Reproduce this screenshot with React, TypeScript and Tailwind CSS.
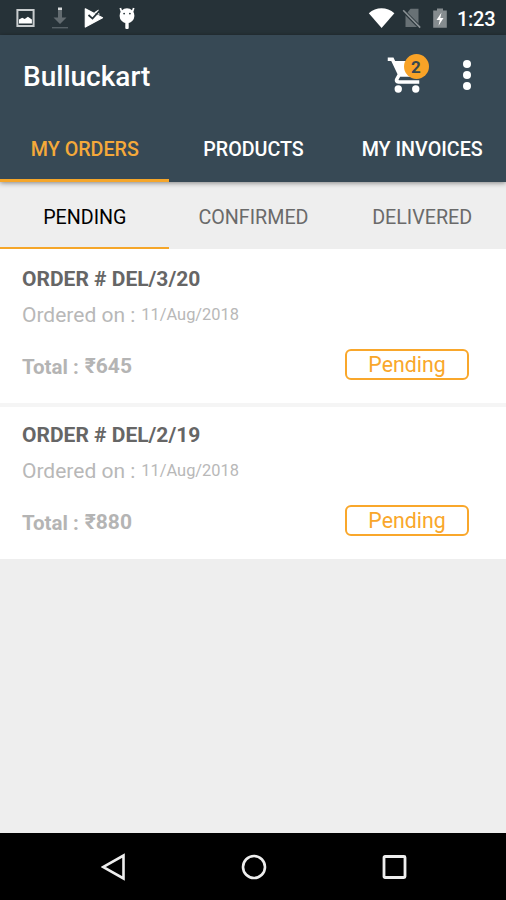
import clsx from "clsx";

type TOrder = { id: string; date: string; total: string; status: string };

const orders: TOrder[] = [
  { id: "DEL/3/20", date: "11/Aug/2018", total: "₹645", status: "Pending" },
  { id: "DEL/2/19", date: "11/Aug/2018", total: "₹880", status: "Pending" },
];

const StatusBar = () => (
  <div className="h-[35px] shrink-0 bg-[#263238]">
    <svg width="506" height="35" viewBox="0 0 506 35">
      {/* picture */}
      <rect x="17.4" y="10" width="16.2" height="16" fill="none" stroke="#c9cdcf" strokeWidth="2" />
      <path d="M19 23.5v-4l3.2-1.8 2.5 1.2 3.2-2.2 4 2.8v4z" fill="#fff" />
      {/* download */}
      <path d="M58 10h4v7.5h4.5L60 24l-6.5-6.5H58z" fill="#626b70" />
      <rect x="58" y="7.5" width="4" height="2.5" fill="#d8dbdc" />
      <rect x="52" y="27" width="16" height="1.4" fill="#566066" />
      {/* play store */}
      <path d="M85.3 8.8L102.5 17.8L85.3 27z" fill="#fff" stroke="#fff" strokeWidth="1.2" strokeLinejoin="round" />
      <path d="M94 12.5L98.5 9.5L99.5 15z" fill="#fff" />
      <path d="M88.5 15l4 3.6L99.2 11.2" fill="none" stroke="#263238" strokeWidth="1.8" />
      {/* debugging */}
      <circle cx="127" cy="15.7" r="7.4" fill="#fff" />
      <path d="M121.8 12.5l-1.5-4.5M132.2 12.5l1.5-4.5" stroke="#fff" strokeWidth="1.8" />
      <rect x="125.3" y="21" width="3.4" height="8" rx="1" fill="#fff" />
      <circle cx="124.1" cy="13.6" r="0.9" fill="#263238" />
      <circle cx="129.9" cy="13.6" r="0.9" fill="#263238" />
      {/* wifi */}
      <path d="M368.8 13.3C376 6.6 387 6.6 394.4 13.3L381.6 28z" fill="#fff" />
      {/* no sim */}
      <path d="M405.5 15l5-6.2h8V27h-13z" fill="#687175" />
      <path d="M402.5 10L420 27.5" stroke="#263238" strokeWidth="3.6" />
      <path d="M403.2 10.2L420.2 27.6" stroke="#8b9295" strokeWidth="1.6" />
      {/* battery */}
      <path d="M437 8.5h6v2h3.8v17.2h-13.6V10.5h3.8z" fill="#858c8f" />
      <path d="M441.5 12.5l-5 7.5h3.3l-1.3 5.8 5-7.8h-3.2z" fill="#fff" />
      <text x="457" y="26" fill="#fff" fontFamily="Roboto, sans-serif" fontSize="20" fontWeight="500" textLength="38.5">
        1:23
      </text>
    </svg>
  </div>
);

const Toolbar = () => (
  <div className="flex h-[82px] shrink-0 items-center justify-between pr-[35px] pl-[23px] text-white">
    <h1 className="pt-[2px] text-[28px] leading-none font-medium">Bulluckart</h1>
    <div className="flex items-center">
      <div className="relative mr-[33px] h-10 w-[42px]">
        <svg className="absolute -top-[2px] -left-[2px]" width="42" height="42" viewBox="0 0 24 24" fill="#fff">
          <path d="M1 2v2h2l3.6 7.59-1.35 2.45C4.52 15.37 5.48 17 7 17h12v-2H7.42c-.14 0-.25-.11-.25-.25l.03-.12.9-1.63h7.45c.75 0 1.41-.41 1.75-1.03l3.58-6.49A1 1 0 0 0 20 4H5.21l-.94-2H1z" />
          <circle cx="7" cy="20" r="2.1" />
          <circle cx="17" cy="20" r="2.1" />
        </svg>
        <span className="absolute -top-[2px] left-[15.5px] flex size-[25px] items-center justify-center rounded-full bg-[#f9a327] pt-px text-[17px] leading-none font-bold text-[#37474f]">
          2
        </span>
      </div>
      <div className="flex flex-col gap-[3.4px] pb-[2px]">
        <span className="size-2 rounded-full bg-white" />
        <span className="size-2 rounded-full bg-white" />
        <span className="size-2 rounded-full bg-white" />
      </div>
    </div>
  </div>
);

type TabsProps = { items: string[]; secondary?: boolean };

const Tabs = ({ items, secondary }: TabsProps) => (
  <div
    className={clsx(
      "grid shrink-0 grid-cols-3 text-[19.7px] leading-[24px]",
      secondary
        ? "h-[67px] bg-[#eeeeee] pt-[24px] text-[#6a6a6a]"
        : "h-[65px] pt-[21px] font-medium text-white"
    )}
  >
    {items.map((item, i) => (
      <div
        key={item}
        className={clsx(
          "flex justify-center pl-px whitespace-nowrap",
          secondary ? "border-b-2" : "border-b-3",
          i === 0 ? "border-[#f5a62a]" : "border-transparent",
          i === 0 && (secondary ? "text-black" : "text-[#f5a93a]")
        )}
      >
        {item}
      </div>
    ))}
  </div>
);

const OrderCard = ({ order }: { order: TOrder }) => (
  <div className="h-[152px] bg-white pt-[16px] pr-[37px] pl-[22px]">
    <p className="text-[21px] leading-[25px] font-bold text-[#666]">ORDER # {order.id}</p>
    <div className="mt-[11px] flex items-baseline gap-[6px] leading-[25px] text-[#b8b8b8]">
      <span className="text-[21px]">Ordered on :</span>
      <span className="relative -top-[2px] text-[16.4px]">{order.date}</span>
    </div>
    <div className="mt-[20px] flex items-center justify-between">
      <p className="flex gap-[6px] pt-[3px] leading-[25px] font-bold text-[#b4b4b4]">
        <span className="relative top-px text-[20.5px]">Total :</span>
        <span className="text-[21px]">{order.total}</span>
      </p>
      <span className="flex h-[31px] w-[124px] items-center justify-center rounded-[6px] border-2 border-[#f9a72b] pt-px text-[21.3px] text-[#f9a72b]">
        {order.status}
      </span>
    </div>
  </div>
);

const NavBar = () => (
  <div className="flex h-[67px] shrink-0 items-center justify-between bg-black pr-[99px] pl-[101px]">
    <svg width="25" height="28" viewBox="0 0 25 28" fill="none" stroke="#eee" strokeWidth="2.6">
      <path d="M22.5 2.5v23L2 14z" />
    </svg>
    <svg width="26" height="26" viewBox="0 0 26 26" fill="none" stroke="#eee" strokeWidth="2.6">
      <circle cx="13" cy="13" r="11" />
    </svg>
    <svg width="25" height="26" viewBox="0 0 25 26" fill="none" stroke="#eee" strokeWidth="2.8">
      <rect x="2" y="2.5" width="21" height="21" rx="1" />
    </svg>
  </div>
);

export default function App() {
  return (
    <div className="flex h-[900px] w-[506px] flex-col overflow-hidden bg-[#eeeeee] font-['Roboto',sans-serif]">
      <StatusBar />
      <header className="z-10 shrink-0 bg-[#374955] shadow-[0_1px_5px_rgba(0,0,0,0.45)]">
        <Toolbar />
        <Tabs items={["MY ORDERS", "PRODUCTS", "MY INVOICES"]} />
      </header>
      <Tabs items={["PENDING", "CONFIRMED", "DELIVERED"]} secondary />
      <main className="flex flex-1 flex-col">
        <div className="flex flex-col gap-1 border-t-2 border-white bg-[#f5f5f5]">
          {orders.map((order) => (
            <OrderCard key={order.id} order={order} />
          ))}
        </div>
      </main>
      <NavBar />
    </div>
  );
}
